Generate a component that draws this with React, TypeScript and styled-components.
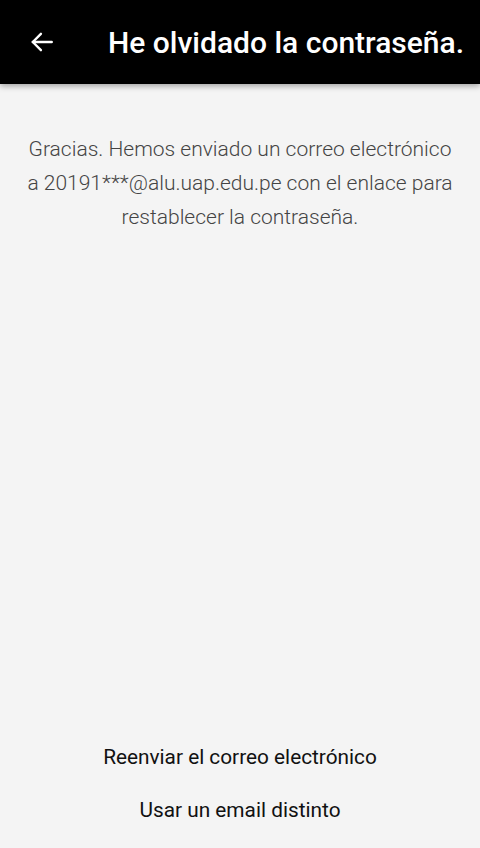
import React from "react";
import styled, { createGlobalStyle } from "styled-components";

const GlobalStyle = createGlobalStyle`
  html, body {
    margin: 0;
    padding: 0;
    background: #f4f4f4;
  }
  #root {
    height: 848px;
  }
`;

const Screen = styled.div`
  display: flex;
  flex-direction: column;
  width: 480px;
  height: 848px;
  background: #f4f4f4;
  font-family: Roboto, "Noto Sans", sans-serif;
  overflow: hidden;
`;

const Toolbar = styled.header`
  display: flex;
  align-items: center;
  height: 84px;
  background: #000;
  box-shadow: 0 2px 6px rgba(0, 0, 0, 0.35);
  flex-shrink: 0;
  position: relative;
  z-index: 1;
`;

const BackButton = styled.button`
  display: flex;
  align-items: center;
  justify-content: center;
  width: 84px;
  height: 84px;
  padding: 0;
  border: none;
  background: transparent;
  cursor: pointer;
`;

const Title = styled.h1`
  margin: 0 0 0 24px;
  color: #fff;
  font-size: 30px;
  font-weight: 500;
  white-space: nowrap;
`;

const Content = styled.main`
  flex: 1;
  display: flex;
  flex-direction: column;
  padding: 48px 22px 0;
`;

const Message = styled.p`
  margin: 0;
  color: #444;
  font-size: 21px;
  font-weight: 300;
  line-height: 34px;
  text-align: center;
`;

const Actions = styled.div`
  display: flex;
  flex-direction: column;
  align-items: center;
  gap: 13px;
  padding-bottom: 18px;
`;

const TextButton = styled.button`
  padding: 0;
  border: none;
  background: transparent;
  color: #111;
  font-family: Roboto, "Noto Sans", sans-serif;
  font-size: 20.8px;
  line-height: 40px;
  cursor: pointer;
`;

const BackArrow = () => (
  <svg width="26" height="26" viewBox="0 0 24 24" fill="none" stroke="#fff" strokeWidth="2.2" strokeLinecap="round" strokeLinejoin="round">
    <path d="M21 12H3.5" />
    <path d="M11 4.5L3.5 12l7.5 7.5" />
  </svg>
);

export default function App() {
  return (
    <>
      <GlobalStyle />
      <Screen>
        <Toolbar>
          <BackButton aria-label="Volver">
            <BackArrow />
          </BackButton>
          <Title>He olvidado la contraseña.</Title>
        </Toolbar>
        <Content>
          <Message>
            Gracias. Hemos enviado un correo electrónico a 20191***@alu.uap.edu.pe con el enlace para restablecer la contraseña.
          </Message>
        </Content>
        <Actions>
          <TextButton>Reenviar el correo electrónico</TextButton>
          <TextButton>Usar un email distinto</TextButton>
        </Actions>
      </Screen>
    </>
  );
}
